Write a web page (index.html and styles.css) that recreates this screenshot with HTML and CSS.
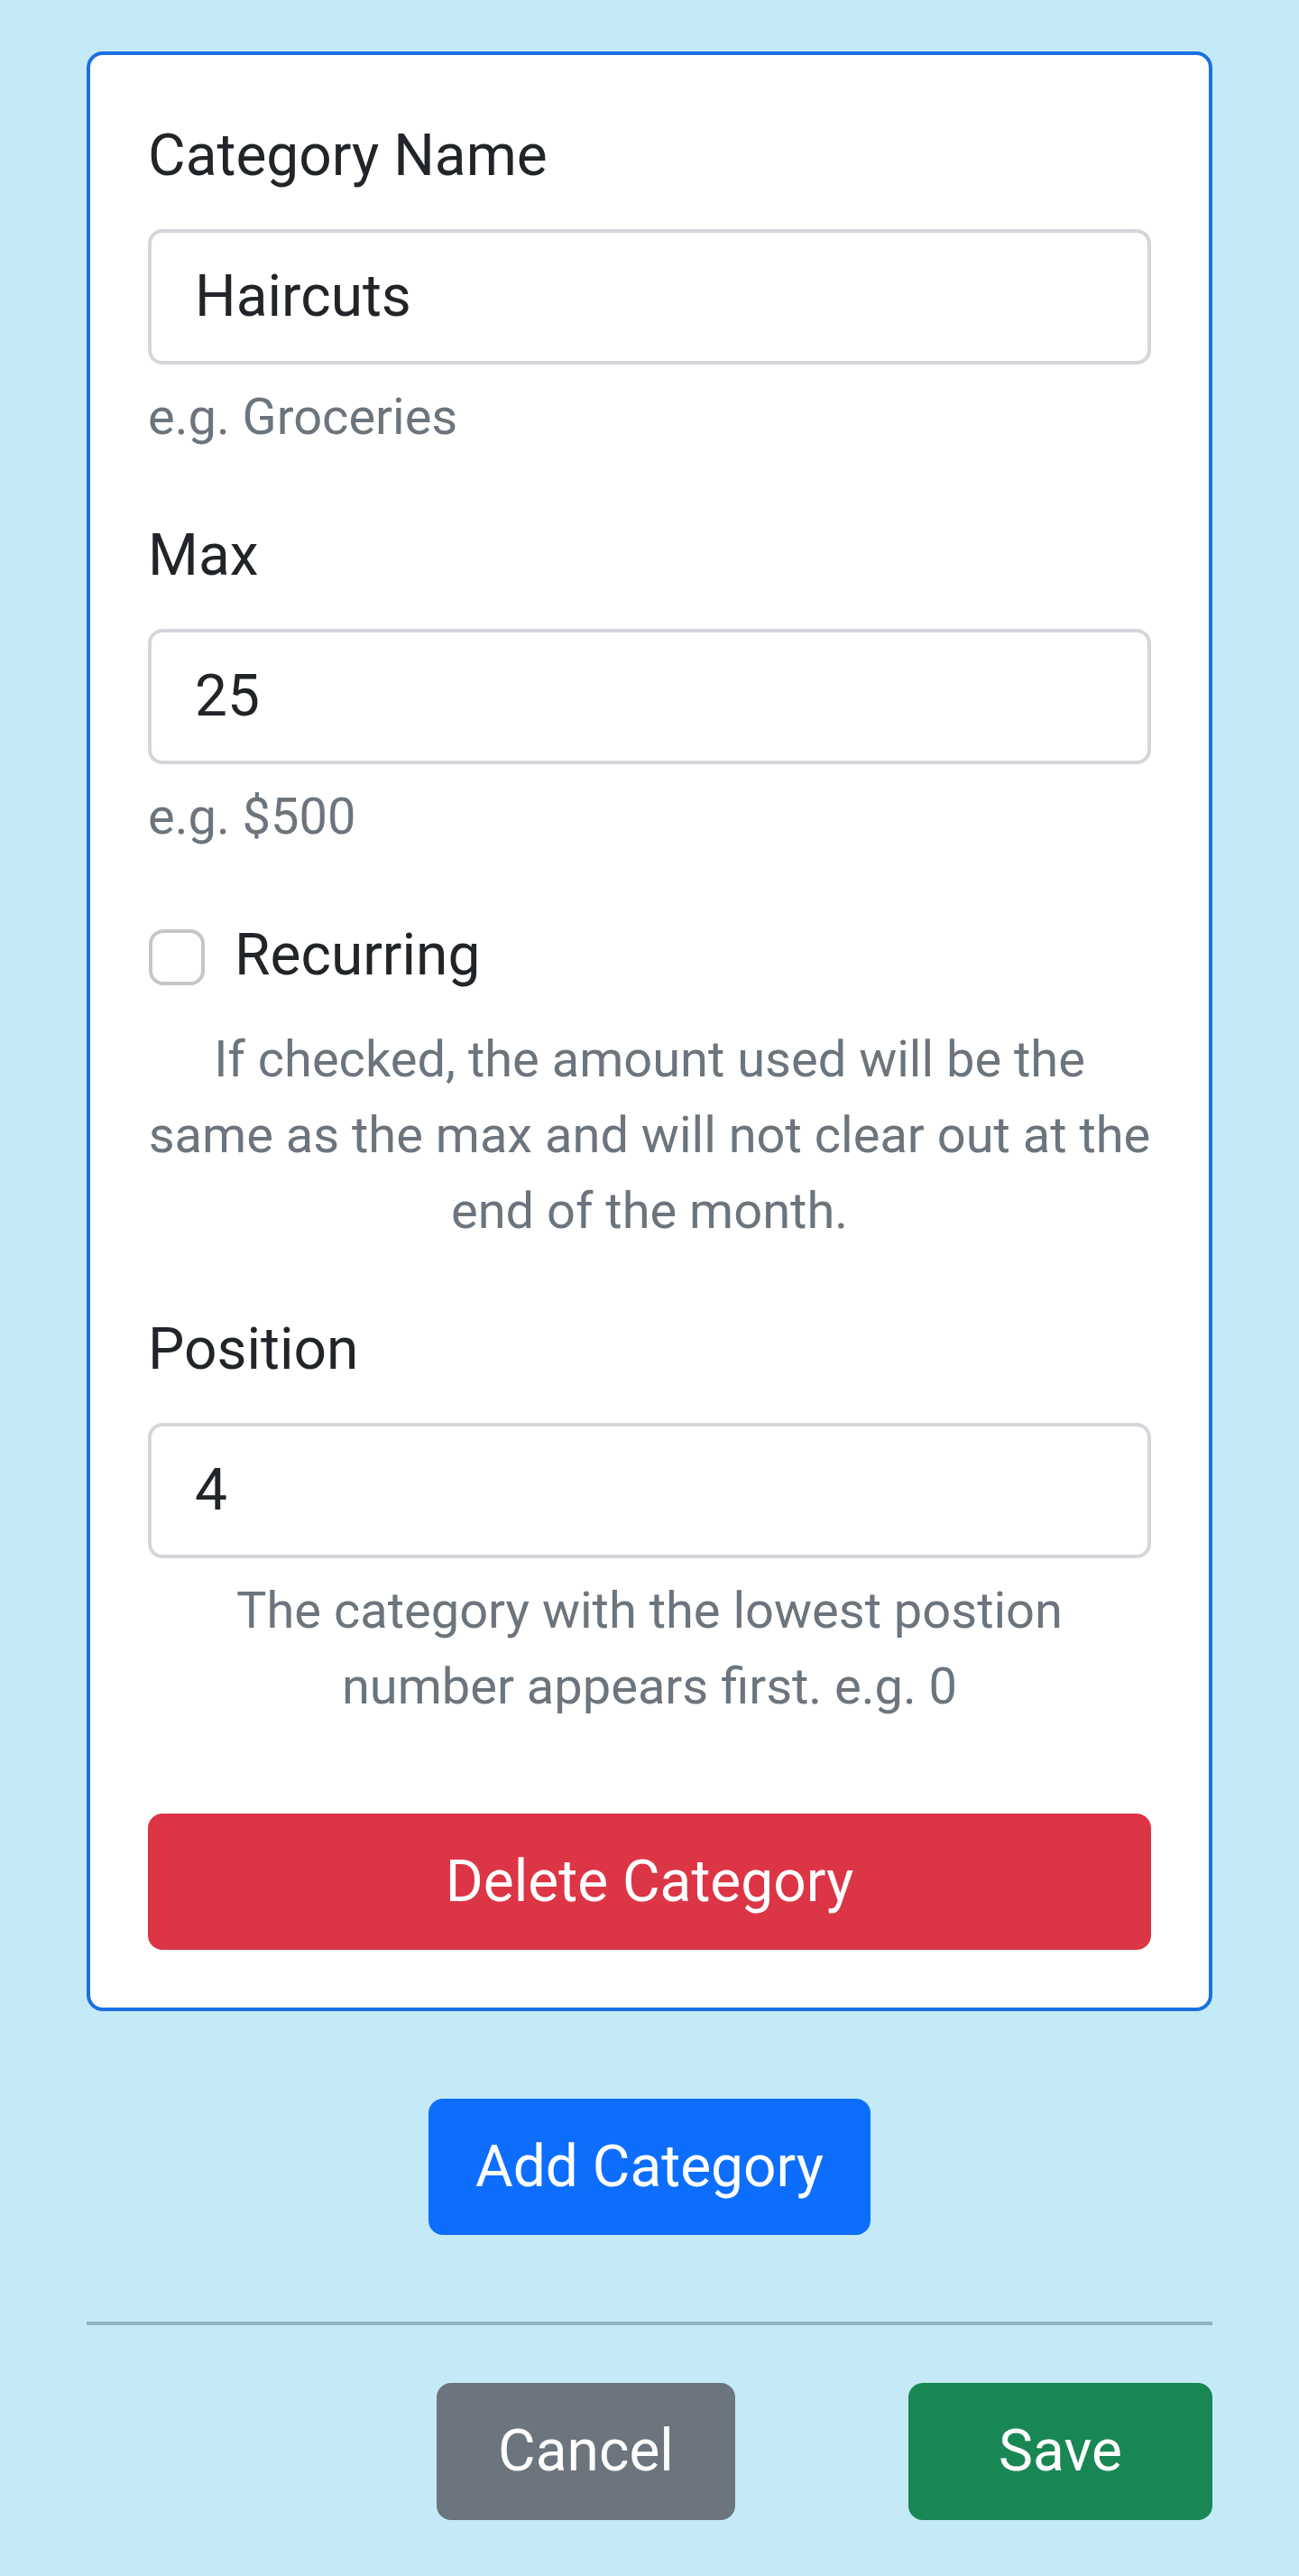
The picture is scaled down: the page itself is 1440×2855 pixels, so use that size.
FILE: index.html
```html
<!DOCTYPE html>
<html lang="en">
<head>
<meta charset="utf-8">
<title>Edit Category</title>
<link rel="stylesheet" href="styles.css">
</head>
<body>
<div class="page">
  <div class="card">
    <div class="group">
      <label class="label">Category Name</label>
      <div class="input">Haircuts</div>
      <div class="help">e.g. Groceries</div>
    </div>
    <div class="group">
      <label class="label">Max</label>
      <div class="input">25</div>
      <div class="help">e.g. $500</div>
    </div>
    <div class="group">
      <div class="check">
        <span class="box"></span>
        <span class="check-label">Recurring</span>
      </div>
      <div class="help center spaced">If checked, the amount used will be the<br>same as the max and will not clear out at the<br>end of the month.</div>
    </div>
    <div class="group last">
      <label class="label">Position</label>
      <div class="input">4</div>
      <div class="help center">The category with the lowest postion<br>number appears first. e.g. 0</div>
    </div>
    <div class="btn btn-danger btn-block">Delete Category</div>
  </div>

  <div class="add-row">
    <div class="btn btn-primary">Add Category</div>
  </div>

  <div class="divider"></div>

  <div class="actions">
    <div class="btn btn-secondary btn-cancel">Cancel</div>
    <div class="btn btn-success btn-save">Save</div>
  </div>
</div>
</body>
</html>
```
FILE: styles.css
```css
* {
  box-sizing: border-box;
}

html, body {
  margin: 0;
  padding: 0;
}

body {
  background: #c4eaf7;
  font-family: Roboto, "Noto Sans", "Liberation Sans", sans-serif;
  color: #212529;
  font-size: 64px;
  line-height: 96px;
}

.page {
  padding: 57px 96px 62px;
}

.card {
  background: #ffffff;
  border: 4px solid #1a6fe3;
  border-radius: 18px;
  padding: 64px;
}

.group {
  margin-bottom: 64px;
}

.group.last {
  margin-bottom: 99px;
}

.label {
  display: block;
  font-size: 64px;
  line-height: 96px;
  margin-bottom: 33px;
}

.input {
  height: 150px;
  border: 4px solid #d3d7db;
  border-radius: 16px;
  padding: 0 48px;
  display: flex;
  align-items: center;
  font-size: 64px;
  color: #212529;
  background: #ffffff;
}

.help {
  margin-top: 16px;
  font-size: 56px;
  line-height: 84px;
  color: #6c757d;
}

.help.center {
  text-align: center;
  white-space: nowrap;
}

.help.spaced {
  margin-top: 25px;
}

.check {
  display: flex;
  align-items: flex-start;
  height: 96px;
}

.box {
  width: 62px;
  height: 62px;
  margin-top: 19px;
  margin-left: 1px;
  border: 4px solid #c6c6c6;
  border-radius: 16px;
  background: #ffffff;
  flex: none;
}

.check-label {
  margin-left: 33px;
  font-size: 64px;
  line-height: 96px;
}

.btn {
  display: inline-flex;
  align-items: center;
  justify-content: center;
  height: 151px;
  padding: 0 48px;
  border: 4px solid transparent;
  border-radius: 16px;
  color: #ffffff;
  font-size: 64px;
  line-height: 96px;
}

.btn-block {
  display: flex;
  width: 100%;
}

.btn-danger {
  background: #dc3545;
  border-color: #dc3545;
}

.btn-primary {
  background: #0d6efd;
  border-color: #0d6efd;
}

.btn-secondary {
  background: #6c757d;
  border-color: #6c757d;
}

.btn-success {
  background: #198754;
  border-color: #198754;
}

.add-row {
  margin-top: 97px;
  display: flex;
  justify-content: center;
}

.divider {
  margin-top: 96px;
  height: 4px;
  background: #93b2bd;
}

.actions {
  margin-top: 64px;
  display: flex;
  justify-content: flex-end;
  gap: 192px;
}

.btn-cancel {
  width: 331px;
  height: 152px;
}

.btn-save {
  width: 337px;
  height: 152px;
}
```
